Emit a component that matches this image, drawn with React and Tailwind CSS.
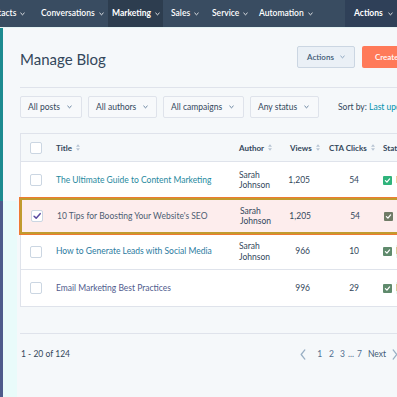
import React from "react";

const Chev = ({ className = "" }) => (
  <svg viewBox="0 0 10 6" className={className} fill="none" stroke="currentColor" strokeWidth="1.8" strokeLinecap="round" strokeLinejoin="round">
    <path d="M1.5 1.2 L5 4.6 L8.5 1.2" />
  </svg>
);

const Sort = () => (
  <svg viewBox="0 0 6 10" className="w-[4px] h-[7px] ml-[4px] text-[#b7c4d3]" fill="currentColor">
    <path d="M3 0 L6 4 H0 Z" />
    <path d="M3 10 L6 6 H0 Z" />
  </svg>
);

const Box = ({ checked }) => (
  <div className="w-[12px] h-[12px] rounded-[2px] border border-[#cbd6e2] bg-white flex items-center justify-center">
    {checked && (
      <svg viewBox="0 0 12 12" className="w-[10px] h-[10px]" fill="none" stroke="#5a4aa0" strokeWidth="1.8" strokeLinecap="round" strokeLinejoin="round">
        <path d="M2.5 6.3 L5 8.6 L9.8 3.2" />
      </svg>
    )}
  </div>
);

const StatusIcon = ({ color }) => (
  <div className="w-[9px] h-[9px] rounded-[1px] flex items-center justify-center" style={{ background: color }}>
    <svg viewBox="0 0 10 10" className="w-[7px] h-[7px]" fill="none" stroke="white" strokeWidth="1.8" strokeLinecap="round" strokeLinejoin="round">
      <path d="M2 5.2 L4.2 7.3 L8 2.8" />
    </svg>
  </div>
);

const NavItem = ({ w, pl, children, bold, className = "" }) => (
  <div className={`flex-none h-full flex items-center ${className}`} style={{ width: w, paddingLeft: pl }}>
    <span className={`text-white text-[8.5px] ${bold ? "font-bold" : "font-semibold"} whitespace-nowrap`}>{children}</span>
    <Chev className="w-[5px] h-[4px] ml-[4px] text-white" />
  </div>
);

const rows = [
  { title: "The Ultimate Guide to Content Marketing", color: "#1f8aa0", views: "1,205", cta: "54", st: "Published", sc: "#2fb37b" },
  { title: "10 Tips for Boosting Your Website's SEO", color: "#4d5d72", views: "1,205", cta: "54", st: "Published", sc: "#6f7b66", sel: true },
  { title: "How to Generate Leads with Social Media", color: "#2a7aa0", views: "966", cta: "10", st: "Modified", sc: "#5f8a6c", mint: true },
  { title: "Email Marketing Best Practices", color: "#4f5b8e", views: "996", cta: "29", st: "Modified", sc: "#5f8a6c", mint: true, noAuthor: true },
];

const Filter = ({ w, children }) => (
  <div className="flex-none h-[22px] border border-[#dfe3eb] bg-[#f7f9fb] rounded-[2px] flex items-center pl-[7px] gap-[7px]" style={{ width: w }}>
    <span className="text-[8.5px] text-[#33475b] whitespace-nowrap">{children}</span>
    <Chev className="w-[5px] h-[4px] text-[#516f90]" />
  </div>
);

export default function App() {
  return (
    <div className="w-[397px] h-[397px] overflow-hidden bg-[#f5f8fa] flex flex-col" style={{ fontFamily: "Lato, 'Open Sans', sans-serif" }}>
      {/* Nav */}
      <div className="h-[27px] flex-none bg-[#394c61] flex items-stretch">
        <div className="flex-none h-full flex items-center ml-[-17px] w-[54px]">
          <span className="text-white text-[8.5px] font-semibold whitespace-nowrap">Contacts</span>
          <Chev className="w-[5px] h-[4px] ml-[4px] text-white" />
        </div>
        <NavItem w={71} pl={4}>Conversations</NavItem>
        <NavItem w={55} pl={4} bold className="bg-[#2d3d4f]">Marketing</NavItem>
        <NavItem w={41} pl={8}>Sales</NavItem>
        <NavItem w={47} pl={8}>Service</NavItem>
        <NavItem w={94} pl={8}>Automation</NavItem>
        <div className="flex-1 h-full flex items-center pl-[9px] bg-[#2f4058]">
          <span className="text-white text-[8.5px] font-bold whitespace-nowrap">Actions</span>
          <Chev className="w-[5px] h-[4px] ml-[5px] text-white" />
        </div>
      </div>
      <div className="h-[1px] flex-none bg-[#e6f4f4]" />
      <div className="flex-1 flex min-h-0">
        {/* left strip */}
        <div className="w-[3px] flex-none flex flex-col">
          <div className="h-[173px] bg-[#1d8b90]" />
          <div className="flex-1 bg-[#4d5b8b]" />
        </div>
        <div className="w-[14px] flex-none flex flex-col">
          <div className="h-[173px] bg-[#f5f8fa]" />
          <div className="flex-1 bg-[#e9fbfa]" />
        </div>
        {/* main */}
        <div className="flex-none w-[403px] pl-[3px] pt-[18px] flex flex-col">
          <div className="h-[22px] flex items-center">
            <div className="text-[15px] text-[#33475b] mt-[4px] leading-none">Manage Blog</div>
            <div className="ml-auto flex gap-[7px]">
              <div className="w-[58px] h-[22px] rounded-[2px] bg-[#eaf0f6] border border-[#cbd6e2] flex items-center justify-center gap-[6px]">
                <span className="text-[8px] font-semibold text-[#425b76]">Actions</span>
                <Chev className="w-[5px] h-[4px] text-[#7c98b6]" />
              </div>
              <div className="w-[58px] h-[22px] rounded-[2px] bg-[#ff7a59] flex items-center pl-[13px]">
                <span className="text-[8px] font-semibold text-white">Create post</span>
              </div>
            </div>
          </div>
          <div className="h-[1px] bg-[#dfe3eb] mt-[19px]" />
          <div className="flex items-center mt-[8px] h-[22px]">
            <Filter w={62}>All posts</Filter>
            <div className="w-[6px]" />
            <Filter w={69}>All authors</Filter>
            <div className="w-[6px]" />
            <Filter w={81}>All campaigns</Filter>
            <div className="w-[6px]" />
            <Filter w={69}>Any status</Filter>
            <div className="ml-[19px] text-[8.5px] whitespace-nowrap text-[#33475b]">
              Sort by: <span className="text-[#0091ae]">Last updated</span>
            </div>
          </div>
          {/* table */}
          <div className="mt-[15px] border border-[#dfe3eb] bg-white text-[8.5px]">
            <div className="h-[28px] bg-[#f5f8fa] grid grid-cols-[29px_183px_52px_40px_50px_1fr] items-center text-[#33475b] font-bold text-[8px] border-b border-[#dfe3eb]">
              <div className="flex justify-center"><Box /></div>
              <div className="pl-[6px] flex items-center">Title<Sort /></div>
              <div className="pl-[6px] flex items-center">Author<Sort /></div>
              <div className="pl-[5px] flex items-center">Views<Sort /></div>
              <div className="pl-[4px] flex items-center whitespace-nowrap">CTA Clicks<Sort /></div>
              <div className="pl-[8px] whitespace-nowrap">Status</div>
            </div>
            {rows.map((r, i) => (
              <div
                key={i}
                className={`h-[36px] grid grid-cols-[29px_183px_52px_40px_50px_1fr] items-center ${
                  r.sel
                    ? "bg-[#fdeded] border-2 border-[#c19b2e] shadow-[0_0_0_1px_#ee7a32] ml-[-1px] relative"
                    : i < rows.length - 1 && !rows[i + 1].sel ? "border-b border-[#dfe3eb]" : ""
                }`}
              >
                <div className="flex justify-center"><Box checked={r.sel} /></div>
                <div className="pl-[6px] whitespace-nowrap" style={{ color: r.color }}>{r.title}</div>
                <div className="pl-[6px] text-[#33475b] leading-[10.5px]">
                  {!r.noAuthor && (<><div>Sarah</div><div>Johnson</div></>)}
                </div>
                <div className="pr-[15px] text-right text-[#33475b]">{r.views}</div>
                <div className="pr-[16px] text-right text-[#33475b]">{r.cta}</div>
                <div className="pl-[8px] flex items-center gap-[4px]">
                  <StatusIcon color={r.sc} />
                  <span className={`text-[#33475b] whitespace-nowrap ${r.mint ? "bg-[#e6f8f0]" : ""}`}>{r.st}</span>
                </div>
              </div>
            ))}
          </div>
          <div className="h-[1px] bg-[#dfe3eb] mt-[26px]" />
          <div className="h-[40px] flex items-center">
            <span className="text-[8.5px] text-[#33475b] pl-[1px]">1 - 20 of 124</span>
            <div className="ml-auto mr-[22px] flex items-center text-[8.5px] text-[#516f90]">
              <svg viewBox="0 0 6 12" className="w-[6px] h-[11px] mr-[11px]" fill="none" stroke="#99afc4" strokeWidth="1.4" strokeLinecap="round" strokeLinejoin="round"><path d="M5 1 L1 6 L5 11" /></svg>
              <span className="mr-[7px]">1</span>
              <span className="mr-[6px]">2</span>
              <span className="mr-[3px]">3</span>
              <span className="mr-[3px]">...</span>
              <span className="mr-[6px]">7</span>
              <span className="mr-[6px] text-[#425b76]">Next</span>
              <svg viewBox="0 0 6 12" className="w-[6px] h-[11px]" fill="none" stroke="#99afc4" strokeWidth="1.4" strokeLinecap="round" strokeLinejoin="round"><path d="M1 1 L5 6 L1 11" /></svg>
            </div>
          </div>
        </div>
      </div>
    </div>
  );
}
